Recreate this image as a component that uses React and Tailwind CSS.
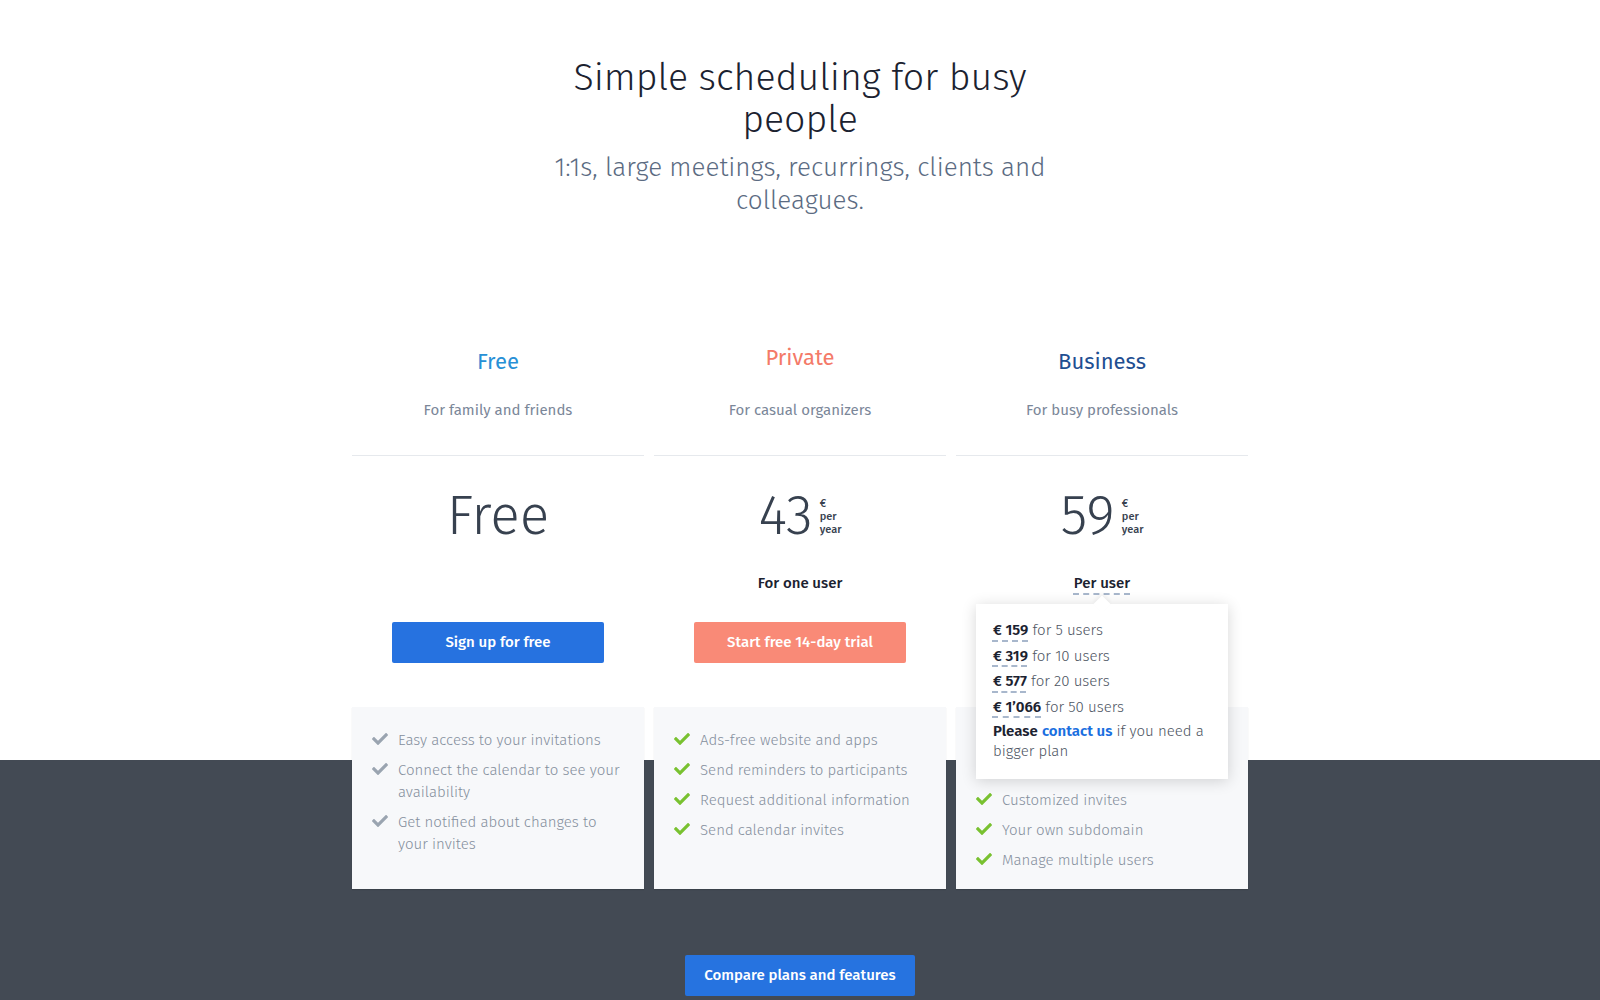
import { FaCheck } from 'react-icons/fa'

const plans = [
  {
    name: 'Free',
    nameClass: 'text-[#2790d6]',
    tagline: 'For family and friends',
    price: 'Free',
    note: '',
    cta: 'Sign up for free',
    ctaClass: 'bg-[#2672e0]',
    checkClass: 'text-[#9aa4b0]',
    features: ['Easy access to your invitations', 'Connect the calendar to see your availability', 'Get notified about changes to your invites'],
  },
  {
    name: 'Private',
    nameClass: '-mt-1 pb-1 text-[#f47a68]',
    tagline: 'For casual organizers',
    price: '43',
    note: 'For one user',
    cta: 'Start free 14-day trial',
    ctaClass: 'bg-[#f98a77]',
    checkClass: 'text-[#79c130]',
    features: ['Ads-free website and apps', 'Send reminders to participants', 'Request additional information', 'Send calendar invites'],
  },
  {
    name: 'Business',
    nameClass: 'text-[#1f4f92]',
    tagline: 'For busy professionals',
    price: '59',
    note: 'Per user',
    cta: null,
    checkClass: 'text-[#79c130]',
    features: ['Everything in Private', 'Your logo and branding', 'Customized invites', 'Your own subdomain', 'Manage multiple users'],
  },
]

const tiers = [
  { price: '€ 159', users: 'for 5 users' },
  { price: '€ 319', users: 'for 10 users' },
  { price: '€ 577', users: 'for 20 users' },
  { price: '€ 1’066', users: 'for 50 users' },
]

function PriceTooltip() {
  return (
    <div className="absolute left-1/2 top-full z-20 mt-[12px] w-[252px] -translate-x-1/2 bg-white px-[17px] pb-[18px] pt-[14px] text-left text-[15px] font-light shadow-[0_2px_14px_rgba(0,0,0,0.16)]">
      <div className="absolute -top-[6px] left-1/2 h-3 w-3 -translate-x-1/2 rotate-45 bg-white shadow-[-2px_-2px_4px_rgba(0,0,0,0.05)]" />
      {tiers.map((tier) => (
        <div key={tier.price} className="leading-[25.5px] text-[#4d5562]">
          <span className="font-semibold text-[#1b2230] underline decoration-[#a8b7cc] decoration-dashed decoration-2 underline-offset-[5px]">{tier.price}</span>{' '}
          {tier.users}
        </div>
      ))}
      <p className="mt-[1px] leading-[20px] text-[#4d5562]">
        <span className="font-semibold text-[#1b2230]">Please</span>{' '}
        <span className="font-semibold text-[#1a6fe0]">contact us</span> if you need a bigger plan
      </p>
    </div>
  )
}

function PlanHead({ plan }) {
  return (
    <div className="flex flex-col items-center text-center">
      <div className="w-full border-b border-[#e6e9ed] pb-[34px]">
        <h2 className={`text-[22px] leading-[28px] ${plan.nameClass}`}>{plan.name}</h2>
        <p className="mt-[23px] text-[15px] leading-[22px] text-[#7b8799]">{plan.tagline}</p>
      </div>
      <div className="mt-[32px] flex h-[56px] items-center text-[#37414f]">
        <span className="text-[55px] font-light leading-none">{plan.price}</span>
        {plan.price !== 'Free' && (
          <span className="ml-[7px] flex flex-col items-start text-[11px] font-medium leading-[13px] text-[#37414f]">
            <span>€</span>
            <span>per</span>
            <span>year</span>
          </span>
        )}
      </div>
      <div className="mt-[28px] h-[22px] text-[15px] font-medium leading-[22px] text-[#1b2230]">
        {plan.note && plan.name === 'Business' ? (
          <span className="relative underline decoration-[#a8b7cc] decoration-dashed decoration-2 underline-offset-[5px]">
            {plan.note}
            <PriceTooltip />
          </span>
        ) : (
          plan.note
        )}
      </div>
      <div className="mt-[28px] h-[41px]">
        {plan.cta && (
          <button type="button" className={`h-[41px] w-[212px] rounded-[2px] text-[15px] font-medium text-white ${plan.ctaClass}`}>
            {plan.cta}
          </button>
        )}
      </div>
    </div>
  )
}

function FeatureBox({ plan }) {
  return (
    <ul className="flex flex-col gap-[8px] bg-[#f7f8fa] pb-[18px] pl-[20px] pr-[14px] pt-[22px] shadow-[0_1px_1px_rgba(0,0,0,0.12)]">
      {plan.features.map((feature) => (
        <li key={feature} className="flex items-start gap-[10px] text-[15px] font-light leading-[22px] text-[#858f9d]">
          <FaCheck className={`mt-[2px] shrink-0 ${plan.checkClass}`} size={16} />
          <span>{feature}</span>
        </li>
      ))}
    </ul>
  )
}

export default function App() {
  return (
    <div className="min-h-screen bg-white font-['Fira_Sans',Lato,'Open_Sans',sans-serif]">
      <header className="mx-auto w-[520px] pt-[57px] text-center">
        <h1 className="mx-auto w-[500px] text-[37.5px] font-light leading-[42px] text-[#1b2230]">Simple scheduling for busy people</h1>
        <p className="mt-[10px] text-[26px] font-light leading-[33px] text-[#5b6b82]">1:1s, large meetings, recurrings, clients and colleagues.</p>
      </header>

      <section className="mx-auto mt-[131px] grid w-[896px] grid-cols-3 gap-x-[10px]">
        {plans.map((plan) => (
          <PlanHead key={plan.name} plan={plan} />
        ))}
      </section>

      <section className="mt-[44px] bg-[linear-gradient(to_bottom,#ffffff_53px,#434a54_53px)] pb-[40px]">
        <div className="mx-auto grid w-[896px] grid-cols-3 gap-x-[10px]">
          {plans.map((plan) => (
            <FeatureBox key={plan.name} plan={plan} />
          ))}
        </div>
        <div className="mt-[66px] flex justify-center">
          <button type="button" className="h-[41px] w-[230px] rounded-[2px] bg-[#2673e0] text-[15px] font-medium text-white">
            Compare plans and features
          </button>
        </div>
      </section>
    </div>
  )
}
